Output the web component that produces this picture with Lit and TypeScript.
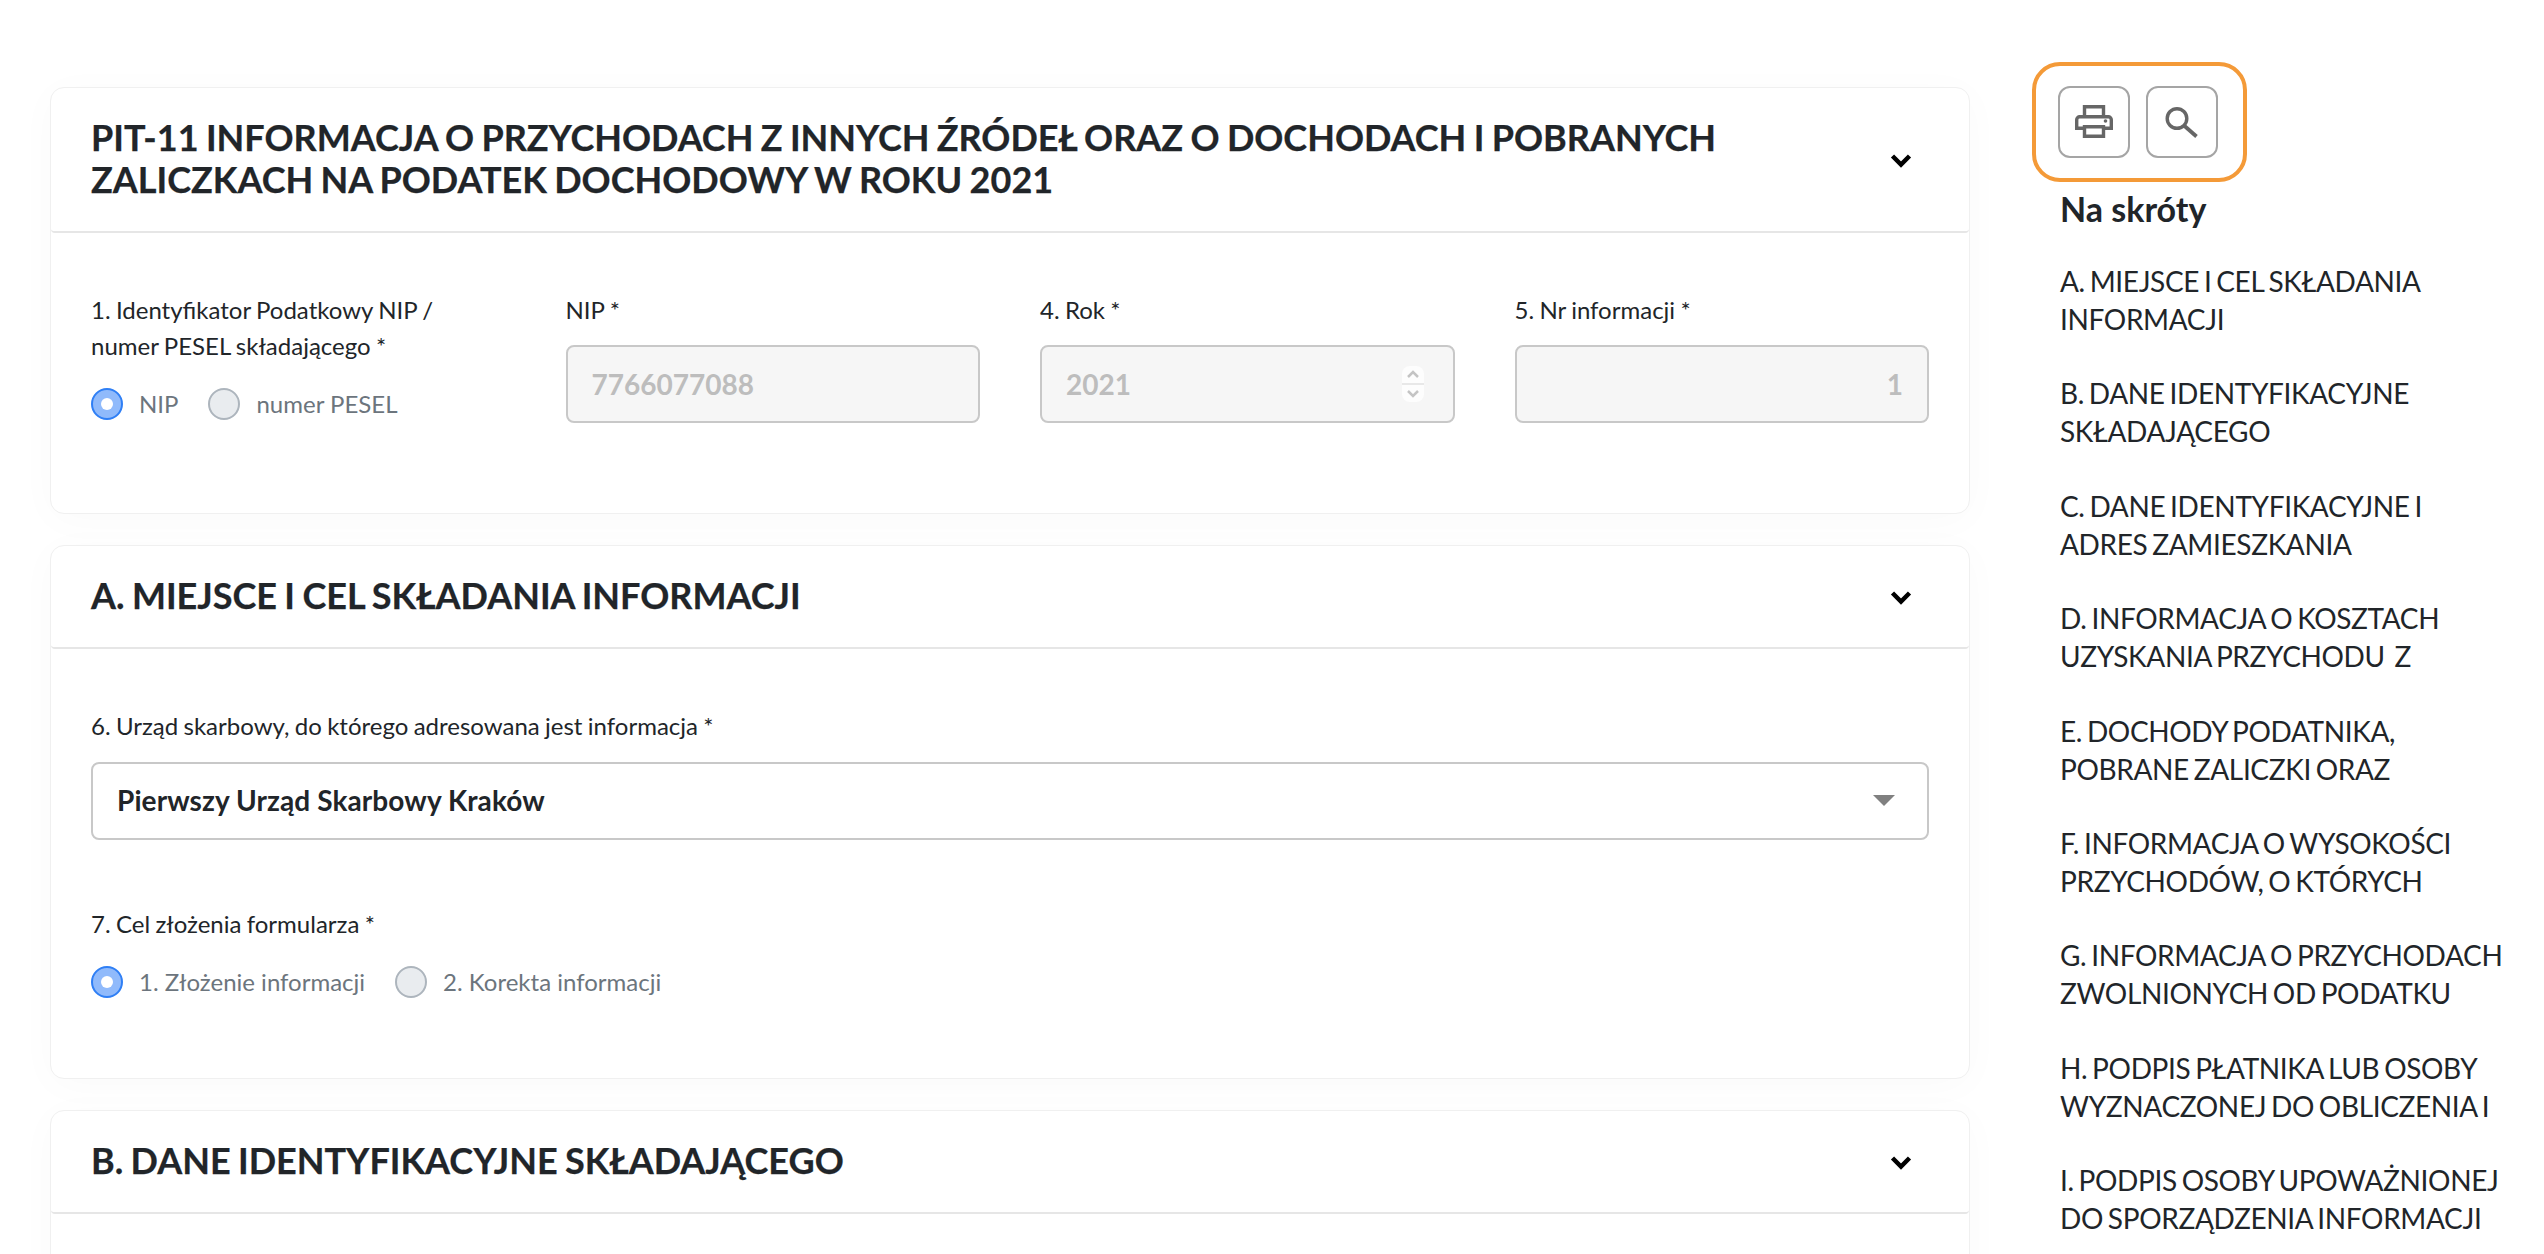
import { LitElement, html, css } from "lit";
import { customElement } from "lit/decorators.js";

const links: [string, string][] = [
  ["A. MIEJSCE I CEL SKŁADANIA", "INFORMACJI"],
  ["B. DANE IDENTYFIKACYJNE", "SKŁADAJĄCEGO"],
  ["C. DANE IDENTYFIKACYJNE I", "ADRES ZAMIESZKANIA"],
  ["D. INFORMACJA O KOSZTACH", "UZYSKANIA PRZYCHODU\u00a0 Z"],
  ["E. DOCHODY PODATNIKA,", "POBRANE ZALICZKI ORAZ"],
  ["F. INFORMACJA O WYSOKOŚCI", "PRZYCHODÓW, O KTÓRYCH"],
  ["G. INFORMACJA O PRZYCHODACH", "ZWOLNIONYCH OD PODATKU"],
  ["H. PODPIS PŁATNIKA LUB OSOBY", "WYZNACZONEJ DO OBLICZENIA I"],
  ["I. PODPIS OSOBY UPOWAŻNIONEJ", "DO SPORZĄDZENIA INFORMACJI"],
];

const chevron = html`<svg class="chev" viewBox="0 0 24 16" width="24" height="16"><path d="M3.500 3l8.500 8.500L20.500 3" fill="none" stroke="#000" stroke-width="4.500"/></svg>`;

@customElement("app-root")
export class AppRoot extends LitElement {
  static styles = css`
    :host { display: block; height: 1254px; overflow: hidden; background: #fff; font-family: Lato, "Liberation Sans", sans-serif; color: #212529; }
    .page { display: flex; align-items: flex-start; }
    .main { margin: 87px 0 0 50px; width: 1920px; flex: none; display: flex; flex-direction: column; gap: 31px; }
    .card { background: #fff; border: 1px solid #f0f0f0; border-radius: 14px; box-shadow: 0 6px 40px rgba(0,0,0,.025); }
    .head { display: flex; align-items: center; justify-content: space-between; padding: 0 40px; border-bottom: 2px solid #e6e6e6; border-radius: 14px 14px 4px 4px; box-sizing: border-box; }
    .head.one { height: 145px; }
    .head.single { height: 103px; }
    .chev { margin-right: 16px; margin-top: 2px; flex: none; }
    h2 { margin: 0 0 3px; font-size: 36px; line-height: 42px; font-weight: 700; word-spacing: -1.400px; -webkit-text-stroke: 0.25px #212529; }
    .body { padding: 0 40px; box-sizing: border-box; }
    .b1 { height: 280px; padding-top: 59px; display: grid; grid-template-columns: repeat(4, 1fr); column-gap: 60px; align-items: start; }
    .b2 { height: 429px; padding-top: 59px; }
    label { display: block; font-size: 24px; line-height: 36px; color: #212529; word-spacing: -0.800px; }
    .inp { margin-top: 17px; height: 78px; box-sizing: border-box; border: 2px solid #c8c8c8; border-radius: 8px; background: #f6f6f6; color: #bdbdbd; font-size: 28px; font-weight: 700; display: flex; align-items: center; justify-content: space-between; padding: 0 24px; }
    .inp.right { justify-content: flex-end; }
    .spin { width: 22px; height: 36px; border-radius: 8px; background: #fdfdfd; display: flex; flex-direction: column; margin-right: 5px; }
    .spin svg { flex: 1; min-height: 0; }
    .spin svg + svg { border-top: 2px solid #e8e8e8; }
    .radios { display: flex; align-items: center; gap: 30px; margin-top: 24px; }
    .radio { display: flex; align-items: center; gap: 16px; font-size: 24px; color: #6c757d; line-height: 32px; }
    .dot { width: 32px; height: 32px; box-sizing: border-box; border-radius: 50%; border: 2px solid #adb5bd; background: #e9ecef; flex: none; }
    .dot.on { border-color: #2f7ff5; background: #90bafb; position: relative; }
    .dot.on::after { content: ""; position: absolute; left: 8px; top: 8px; width: 12px; height: 12px; border-radius: 50%; background: #fff; }
    .select { margin-top: 18px; height: 78px; box-sizing: border-box; border: 2px solid #c8c8c8; border-radius: 8px; background: #fff; font-size: 28px; font-weight: 700; color: #212529; letter-spacing: 0.1px; display: flex; align-items: center; justify-content: space-between; padding: 0 32px 2px 24px; }
    .caret { width: 0; height: 0; border-left: 11px solid transparent; border-right: 11px solid transparent; border-top: 11px solid #808080; }
    .field2 { margin-top: 66px; }
    .field2 .radios { margin-top: 24px; }
    .side { margin: 62px 0 0 62px; flex: none; width: 490px; }
    .tools { width: 215px; height: 120px; box-sizing: border-box; border: 4px solid #f49a38; border-radius: 28px; display: flex; gap: 16px; padding: 20px 0 0 22px; }
    .btn { width: 72px; height: 72px; box-sizing: border-box; border: 2px solid #a5a5a5; border-radius: 12px; display: flex; align-items: center; justify-content: center; background: #fff; }
    h3 { margin: 5px 0 0 28px; font-size: 34px; line-height: 44px; font-weight: 700; color: #212529; }
    .links { margin: 31px 0 0 28px; display: flex; flex-direction: column; gap: 36.400px; }
    .link { font-size: 28px; line-height: 38px; color: #212529; white-space: nowrap; letter-spacing: -0.350px; word-spacing: -2px; }
  `;

  render() {
    return html`<div class="page">
      <div class="main">
        <section class="card">
          <div class="head one">
            <h2>PIT-11 INFORMACJA O PRZYCHODACH Z INNYCH ŹRÓDEŁ ORAZ O DOCHODACH I POBRANYCH<br />ZALICZKACH NA PODATEK DOCHODOWY W ROKU 2021</h2>
            ${chevron}
          </div>
          <div class="body b1">
            <div>
              <label>1. Identyfikator Podatkowy NIP /<br />numer PESEL składającego *</label>
              <div class="radios">
                <div class="radio"><span class="dot on"></span>NIP</div>
                <div class="radio"><span class="dot"></span>numer PESEL</div>
              </div>
            </div>
            <div><label>NIP *</label><div class="inp">7766077088</div></div>
            <div><label>4. Rok *</label><div class="inp">2021
              <div class="spin">
                <svg viewBox="0 0 22 17"><path d="M6 11l5-5 5 5" fill="none" stroke="#c4c4c4" stroke-width="2.500"/></svg>
                <svg viewBox="0 0 22 17"><path d="M6 6l5 5 5-5" fill="none" stroke="#c4c4c4" stroke-width="2.500"/></svg>
              </div></div></div>
            <div><label>5. Nr informacji *</label><div class="inp right">1</div></div>
          </div>
        </section>
        <section class="card">
          <div class="head single"><h2>A. MIEJSCE I CEL SKŁADANIA INFORMACJI</h2>${chevron}</div>
          <div class="body b2">
            <label>6. Urząd skarbowy, do którego adresowana jest informacja *</label>
            <div class="select">Pierwszy Urząd Skarbowy Kraków<span class="caret"></span></div>
            <div class="field2">
              <label>7. Cel złożenia formularza *</label>
              <div class="radios">
                <div class="radio"><span class="dot on"></span>1. Złożenie informacji</div>
                <div class="radio"><span class="dot"></span>2. Korekta informacji</div>
              </div>
            </div>
          </div>
        </section>
        <section class="card">
          <div class="head single"><h2>B. DANE IDENTYFIKACYJNE SKŁADAJĄCEGO</h2>${chevron}</div>
          <div class="body" style="height:120px"></div>
        </section>
      </div>
      <aside class="side">
        <div class="tools">
          <div class="btn">
            <svg width="40" height="40" viewBox="0 0 40 40" fill="none" stroke="#666" stroke-width="3.400">
              <path d="M10.500 14.700V4.700h19v10"/>
              <path d="M10.500 26.300H2.700V17.700a3 3 0 0 1 3-3h28.600a3 3 0 0 1 3 3v8.600h-7.800"/>
              <path d="M10.500 24.700h19v9.600h-19z"/>
              <circle cx="31.500" cy="19" r="1.800" fill="#666" stroke="none"/>
            </svg>
          </div>
          <div class="btn">
            <svg width="40" height="40" viewBox="0 0 40 40" fill="none" stroke="#666" stroke-width="3.400">
              <circle cx="15" cy="16.500" r="9.800"/>
              <path d="M22 23.500l12.500 11" stroke-width="3.800"/>
            </svg>
          </div>
        </div>
        <h3>Na skróty</h3>
        <div class="links">
          ${links.map((l) => html`<div class="link">${l[0]}<br />${l[1]}</div>`)}
        </div>
      </aside>
    </div>`;
  }
}
